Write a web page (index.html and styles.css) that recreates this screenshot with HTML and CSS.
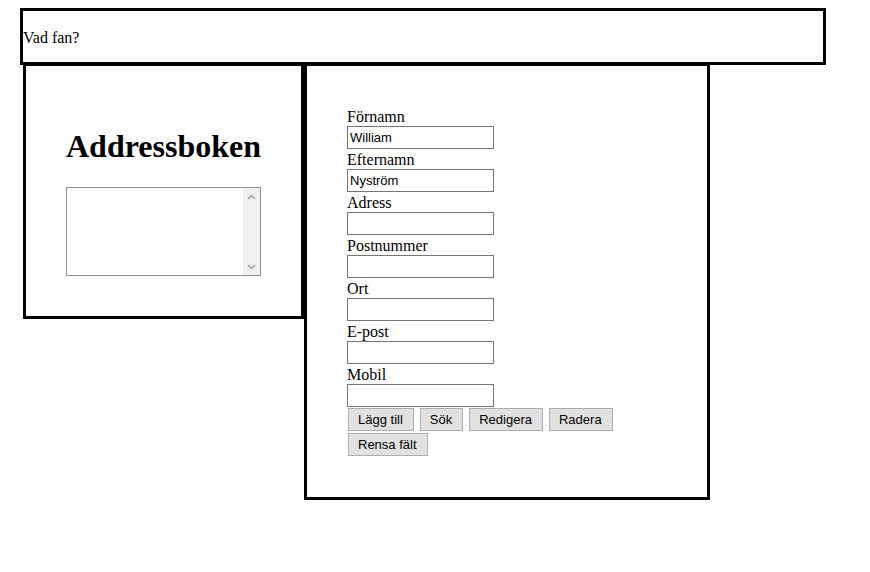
FILE: index.html
```html
<!DOCTYPE html>
<html lang="sv">
<head>
<meta charset="utf-8">
<title>Addressboken</title>
<link rel="stylesheet" href="styles.css">
</head>
<body>
<div class="page">
  <header class="topbar">Vad fan?</header>
  <div class="columns">
    <section class="left-box">
      <h1 class="title">Addressboken</h1>
      <div class="list-wrap">
        <textarea class="list"></textarea>
        <div class="scrollbar" aria-hidden="true">
          <svg class="arrow" width="9" height="6" viewBox="0 0 9 6"><path d="M1 5 L4.5 1.5 L8 5" fill="none" stroke="#a3a3a3" stroke-width="1.5"/></svg>
          <svg class="arrow" width="9" height="6" viewBox="0 0 9 6"><path d="M1 1 L4.5 4.5 L8 1" fill="none" stroke="#a3a3a3" stroke-width="1.5"/></svg>
        </div>
      </div>
    </section>
    <section class="right-box">
      <form class="form">
        <label class="lbl">Förnamn</label>
        <input class="field" type="text" value="William">
        <label class="lbl">Efternamn</label>
        <input class="field" type="text" value="Nyström">
        <label class="lbl">Adress</label>
        <input class="field" type="text">
        <label class="lbl">Postnummer</label>
        <input class="field" type="text">
        <label class="lbl">Ort</label>
        <input class="field" type="text">
        <label class="lbl">E-post</label>
        <input class="field" type="text">
        <label class="lbl">Mobil</label>
        <input class="field" type="text">
        <div class="buttons">
          <button type="button" class="btn">Lägg till</button>
          <button type="button" class="btn">Sök</button>
          <button type="button" class="btn">Redigera</button>
          <button type="button" class="btn">Radera</button>
          <button type="button" class="btn">Rensa fält</button>
        </div>
      </form>
    </section>
  </div>
</div>
</body>
</html>
```

FILE: styles.css
```css
html, body {
  margin: 0;
  padding: 0;
  background: #fff;
}
body {
  font-family: "Liberation Serif", "Times New Roman", serif;
  font-size: 16px;
  color: #000;
}
.page {
  padding: 8px 0 0 20px;
}
.topbar {
  box-sizing: border-box;
  width: 806px;
  height: 57px;
  border: 3px solid #000;
  padding-top: 18px;
  line-height: 18px;
}
.columns {
  display: flex;
  align-items: flex-start;
  margin-left: 3px;
}
.left-box {
  box-sizing: border-box;
  width: 281px;
  height: 254px;
  border: 3px solid #000;
  border-top-width: 1px;
  padding: 62px 0 0 40px;
}
.title {
  margin: 0 0 22px 0;
  font-size: 32px;
  font-weight: bold;
  line-height: 37px;
}
.list-wrap {
  position: relative;
  width: 195px;
  height: 89px;
}
.list {
  display: block;
  box-sizing: border-box;
  width: 195px;
  height: 89px;
  margin: 0;
  padding: 2px 19px 2px 2px;
  border: 1px solid #8f8f9d;
  resize: none;
  overflow: hidden;
  font-family: "Liberation Mono", monospace;
  font-size: 13px;
  background: #fff;
}
.scrollbar {
  position: absolute;
  top: 1px;
  right: 1px;
  bottom: 1px;
  width: 17px;
  background: #f0f0f0;
  display: flex;
  flex-direction: column;
  justify-content: space-between;
  align-items: center;
  padding: 6px 0 5px;
  box-sizing: border-box;
}
.arrow {
  display: block;
}
.right-box {
  box-sizing: border-box;
  width: 406px;
  border: 3px solid #000;
  border-top-width: 1px;
  padding: 40px 40px 41px 40px;
}
.form {
  display: flex;
  flex-direction: column;
  align-items: flex-start;
}
.lbl {
  display: block;
  height: 20px;
  padding-top: 2px;
  box-sizing: border-box;
  line-height: 18px;
}
.field {
  box-sizing: border-box;
  width: 147px;
  height: 23px;
  margin: 0;
  padding: 1px 2px;
  border: 1px solid #767676;
  font-family: "Liberation Sans", Arial, sans-serif;
  font-size: 13px;
  color: #000;
  background: #fff;
}
.buttons {
  display: flex;
  flex-wrap: wrap;
  gap: 2px 6px;
  margin: 1px 0 0 1px;
  width: 319px;
}
.btn {
  box-sizing: border-box;
  height: 23px;
  margin: 0;
  padding: 0 10px 0 9px;
  border: 1px solid #adadad;
  background: #e1e1e1;
  font-family: "Liberation Sans", Arial, sans-serif;
  font-size: 13px;
  color: #000;
}
```
